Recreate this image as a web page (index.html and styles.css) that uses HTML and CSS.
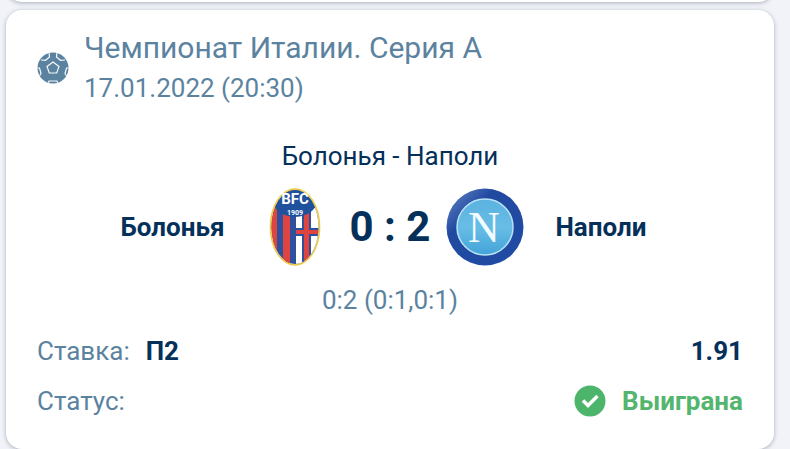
FILE: index.html
```html
<!DOCTYPE html>
<html lang="ru">
<head>
    <meta charset="UTF-8">
    <meta name="viewport" content="width=device-width, initial-scale=1">
    <title>Болонья - Наполи</title>
    <link rel="stylesheet" href="styles.css">
</head>
<body>
    <div class="card card-prev"></div>
    <article class="card">
        <header class="league">
            <svg class="league-icon" viewBox="0 0 32 32" aria-hidden="true">
                <defs>
                    <clipPath id="ball"><circle cx="16" cy="16" r="15.500"/></clipPath>
                </defs>
                <circle cx="16" cy="16" r="15.500" fill="#5b83a0"/>
                <g clip-path="url(#ball)" fill="none" stroke="#f4f9fc" stroke-width="1.200">
                    <path d="M16 10l6 4.500-2.300 6.500h-7.400l-2.300-6.500z"/>
                    <path d="M4 8l4.500.3 4-3.300-.5-5M28 8l-4.500.3-4-3.300.5-5"/>
                    <path d="M0 16h2.500l1.500 5.500-3 5M32 16h-2.500l-1.500 5.500 3 5"/>
                    <path d="M11 32l1-3h8l1 3"/>
                </g>
            </svg>
            <div class="league-info">
                <h1 class="league-name">Чемпионат Италии. Серия А</h1>
                <time class="league-date" datetime="2022-01-17T20:30">17.01.2022 (20:30)</time>
            </div>
        </header>

        <h2 class="match-title">Болонья - Наполи</h2>

        <div class="match">
            <div class="team team-home">Болонья</div>
            <svg class="team-logo" viewBox="0 0 78 78" role="img" aria-label="Болонья">
                <defs>
                    <clipPath id="shield"><ellipse cx="39" cy="39" rx="23.500" ry="37"/></clipPath>
                </defs>
                <ellipse cx="39" cy="39" rx="25.500" ry="39" fill="#f3df80"/>
                <g clip-path="url(#shield)">
                    <rect width="78" height="78" fill="#2f4f9f"/>
                    <path d="M13 0h8v78h-8zM27 0h7v78h-7z" fill="#df4540"/>
                    <path d="M40 20h25v58h-25z" fill="#fff"/>
                    <path d="M46 20h9v20h10v8h-10v30h-9v-30h-6v-8h6z" fill="#2f4f9f"/>
                    <path d="M48 20h5v22h12v4h-12v32h-5v-32h-8v-4h8z" fill="#df4540"/>
                    <ellipse cx="39" cy="10" rx="23" ry="19" fill="#20519c"/>
                </g>
                <ellipse cx="39" cy="39" rx="24.500" ry="38" fill="none" stroke="#e9c23f"/>
                <text class="bfc" x="39" y="16">BFC</text>
                <text class="bfc-year" x="39" y="27">1909</text>
            </svg>
            <div class="score">0 : 2</div>
            <svg class="team-logo" viewBox="0 0 78 78" role="img" aria-label="Наполи">
                <defs>
                    <linearGradient id="ring" x1="0" y1="0" x2="1" y2="1">
                        <stop offset="0" stop-color="#3d5fae"/>
                        <stop offset=".15" stop-color="#476bb5"/>
                        <stop offset=".32" stop-color="#2149a0"/>
                        <stop offset="1" stop-color="#204ca5"/>
                    </linearGradient>
                    <linearGradient id="disc" x1="0" y1="0" x2="0" y2="1">
                        <stop offset="0" stop-color="#5bb2df"/>
                        <stop offset=".5" stop-color="#68bde6"/>
                        <stop offset="1" stop-color="#43a3d9"/>
                    </linearGradient>
                </defs>
                <circle cx="39" cy="39" r="38.500" fill="url(#ring)"/>
                <circle cx="39" cy="39" r="28" fill="url(#disc)" stroke="#b9e2f5" stroke-width="1.500"/>
                <text class="napoli-n" x="38" y="54">N</text>
            </svg>
            <div class="team">Наполи</div>
        </div>

        <p class="periods">0:2 (0:1,0:1)</p>

        <dl class="bet">
            <div class="bet-row">
                <dt>Ставка:</dt>
                <dd class="bet-pick">П2</dd>
                <dd class="bet-odds">1.91</dd>
            </div>
            <div class="bet-row">
                <dt>Статус:</dt>
                <dd class="bet-status">
                    <svg class="status-icon" viewBox="0 0 32 32" aria-hidden="true">
                        <circle cx="16" cy="16" r="15.500" fill="#4cb46b"/>
                        <path d="M9 15.500l5 5 9.500-9.500" fill="none" stroke="#fff" stroke-width="3.500"/>
                    </svg>
                    Выиграна
                </dd>
            </div>
        </dl>
    </article>
</body>
</html>
```
FILE: styles.css
```css
* {
    box-sizing: border-box;
}

body {
    margin: 0;
    padding: 0 16px 0 6px;
    background-color: #f1f3f9;
    font-family: Roboto, "Liberation Sans", sans-serif;
    font-size: 26px;
    line-height: 40px;
    color: #04305a;
    overflow: hidden;
}

h1, h2, p, dl, dd {
    margin: 0;
    font-size: 26px;
    font-weight: 400;
}

.card {
    padding: 18px 31px 28px 31px;
    background-color: #fff;
    border-radius: 16px;
    box-shadow: 0 1px 4px rgba(40, 45, 65, 0.35);
}

/* tail of the previous card in the list */
.card-prev {
    height: 40px;
    padding: 0;
    margin-top: -38px;
    margin-bottom: 8px;
}

.league {
    display: flex;
    align-items: center;
    gap: 15px;
    color: #5b83a0;
}

.league-icon,
.status-icon {
    width: 32px;
    height: 32px;
    flex-shrink: 0;
}

.league-name {
    font-size: 30px;
}

.league-date {
    display: block;
}

.match-title {
    margin-top: 28px;
    text-align: center;
}

.match {
    display: grid;
    grid-template-columns: 1fr 78px auto 78px 1fr;
    align-items: center;
    margin-top: 12px;
}

.team {
    padding: 0 31px;
    font-weight: 700;
}

.team-home {
    text-align: right;
}

.team-logo {
    display: block;
    width: 78px;
    height: 78px;
}

.score {
    padding: 0 16px;
    font-size: 42px;
    font-weight: 700;
}

.bfc {
    font: bold 15px Roboto, sans-serif;
    text-anchor: middle;
    fill: #fff;
}

.bfc-year {
    font: bold 7px Roboto, sans-serif;
    text-anchor: middle;
    fill: #fff;
}

.napoli-n {
    font: 44px "Liberation Serif", serif;
    text-anchor: middle;
    fill: #f2fbff;
}

.periods {
    margin-top: 14px;
    text-align: center;
    color: #5b83a0;
}

.bet {
    display: grid;
    gap: 10px;
    margin-top: 11px;
}

.bet-row {
    display: flex;
    align-items: center;
    gap: 16px;
}

.bet-row dt {
    color: #5b83a0;
}

.bet-row dd {
    font-weight: 700;
}

.bet-row .bet-odds,
.bet-row .bet-status {
    margin-left: auto;
}

.bet-status {
    display: flex;
    align-items: center;
    gap: 16px;
    color: #53b56e;
}
```
